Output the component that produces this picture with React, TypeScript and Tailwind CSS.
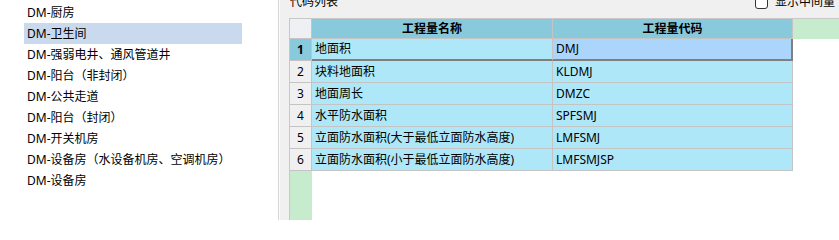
import React from "react";

const ROOMS = [
  "DM-厨房",
  "DM-卫生间",
  "DM-强弱电井、通风管道井",
  "DM-阳台（非封闭）",
  "DM-公共走道",
  "DM-阳台（封闭）",
  "DM-开关机房",
  "DM-设备房（水设备机房、空调机房）",
  "DM-设备房",
];

const ROWS = [
  { name: "地面积", code: "DMJ" },
  { name: "块料地面积", code: "KLDMJ" },
  { name: "地面周长", code: "DMZC" },
  { name: "水平防水面积", code: "SPFSMJ" },
  { name: "立面防水面积(大于最低立面防水高度)", code: "LMFSMJ" },
  { name: "立面防水面积(小于最低立面防水高度)", code: "LMFSMJSP" },
];

const App = () => {
  return (
    <div
      className="w-[839px] h-[220px] flex bg-[#f0f0f0] overflow-hidden text-[12px] text-black"
      style={{ fontFamily: '"Noto Sans", "Noto Sans CJK SC", sans-serif' }}
    >
      {/* room list */}
      <div className="w-[279px] h-full bg-white border-r border-[#d6d6d6] pt-[2px] shrink-0">
        {ROOMS.map((room, i) => (
          <div
            key={i}
            className={`ml-[24px] w-[218px] h-[21px] pl-[3px] flex items-center whitespace-nowrap ${
              i === 1 ? "bg-[#c9d9ee]" : ""
            }`}
          >
            {room}
          </div>
        ))}
      </div>

      {/* code list */}
      <div className="flex-1 flex flex-col pl-[9px] border-l border-[#fbfbfb] overflow-hidden">
        <div className="h-[18px] flex items-start justify-between shrink-0">
          <span className="-mt-[7px] ml-[1px] leading-[18px]">代码列表</span>
          <div className="flex items-start -mt-[4px] mr-[4px]">
            <span className="w-[13px] h-[13px] rounded-[3px] border border-[#333] bg-white" />
            <span className="ml-[7px] -mt-[3px] leading-[18px] whitespace-nowrap">
              显示中间量
            </span>
          </div>
        </div>

        <div className="flex-1 bg-white border-t border-l border-[#c8c8c8] flex flex-col">
          {/* header */}
          <div className="flex h-[20px] shrink-0">
            <div className="w-[22px] bg-[#eef0f4] border-r border-b border-[#c4c4c4]" />
            <div className="w-[241px] bg-[#89c9dc] border-r border-b border-[#c4c4c4] flex items-center justify-center font-bold">
              工程量名称
            </div>
            <div className="w-[240px] bg-[#89c9dc] border-r border-b border-[#c4c4c4] flex items-center justify-center font-bold">
              工程量代码
            </div>
            <div className="flex-1 bg-[#c7ebcd]" />
          </div>

          {ROWS.map((row, i) => {
            const current = i === 0;
            return (
              <div key={i} className="flex h-[22px] shrink-0">
                <div
                  className={`w-[22px] border-r border-b border-[#c4c4c4] flex items-center justify-center ${
                    current ? "bg-[#89c9dc] font-bold" : "bg-[#f0f0f0]"
                  }`}
                >
                  {i + 1}
                </div>
                <div
                  className={`w-[241px] bg-[#aee8f8] border-r border-[#c4c4c4] pl-[3px] flex items-center whitespace-nowrap ${
                    current ? "border-b-2 border-b-[#7f7f7f]" : "border-b"
                  }`}
                >
                  {row.name}
                </div>
                <div
                  className={`w-[240px] pl-[3px] flex items-center ${
                    current
                      ? "bg-[#abd5fb] border-b-2 border-r-2 border-[#7f7f7f]"
                      : "bg-[#aee8f8] border-r border-b border-[#c4c4c4]"
                  }`}
                >
                  {row.code}
                </div>
                <div className="flex-1 bg-white" />
              </div>
            );
          })}

          <div className="flex-1 flex">
            <div className="w-[22px] bg-[#c7ebcd]" />
            <div className="flex-1 bg-white" />
          </div>
        </div>
      </div>
    </div>
  );
};

export default App;
